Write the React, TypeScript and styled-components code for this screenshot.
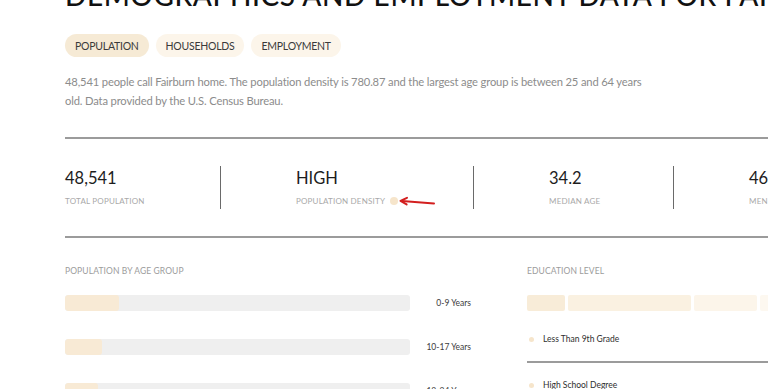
import styled, { createGlobalStyle } from 'styled-components';

const GlobalStyle = createGlobalStyle`
	html, body {
		margin: 0;
		padding: 0;
		background: #ffffff;
		overflow: hidden;
	}

	body {
		font-family: Lato, 'Open Sans', sans-serif;
		color: #222;
	}
`;

const tabs = [
	{ label: 'POPULATION', active: true },
	{ label: 'HOUSEHOLDS', active: false },
	{ label: 'EMPLOYMENT', active: false },
];

const stats = [
	{ value: '48,541', label: 'TOTAL POPULATION', width: 155, info: false },
	{ value: 'HIGH', label: 'POPULATION DENSITY', width: 253, info: true },
	{ value: '34.2', label: 'MEDIAN AGE', width: 200, info: false },
	{ value: '46', label: 'MEN', width: 200, info: false },
];

const ageGroups = [
	{ label: '0-9 Years', pct: 15.7 },
	{ label: '10-17 Years', pct: 10.8 },
	{ label: '18-24 Years', pct: 9.5 },
];

const eduSegments = [
	{ width: 38, color: '#f8ecd8' },
	{ width: 123, color: '#faf1e1' },
	{ width: 63, color: '#fcf5ea' },
	{ width: 60, color: '#fdf8f0' },
];

const eduLegend = ['Less Than 9th Grade', 'High School Degree'];

function App() {
	return (
		<>
			<GlobalStyle />
			<Page>
				<Heading>DEMOGRAPHICS AND EMPLOYMENT DATA FOR FAIRBURN</Heading>

				<TabRow>
					{tabs.map((tab) => (
						<Tab key={tab.label} $active={tab.active}>
							{tab.label}
						</Tab>
					))}
				</TabRow>

				<Intro>
					48,541 people call Fairburn home. The population density is 780.87 and the largest age group is between 25 and 64 years
					old. Data provided by the U.S. Census Bureau.
				</Intro>

				<StatsBar>
					{stats.map((stat, i) => (
						<StatCell key={stat.label} $width={stat.width} $first={i === 0}>
							<StatValue>{stat.value}</StatValue>
							<StatLabel>
								{stat.label}
								{stat.info && (
									<InfoWrap>
										<InfoDot />
										{/* 주석용 빨간 화살표 */}
										<Arrow width="40" height="10" viewBox="0 0 40 10">
											<path d="M36 7.5 L4 5" stroke="#d31f1f" strokeWidth="2" fill="none" strokeLinecap="round" />
											<path d="M9 1.8 L2.5 4.9 L8.6 8.4" stroke="#d31f1f" strokeWidth="2" fill="none" strokeLinecap="round" strokeLinejoin="round" />
										</Arrow>
									</InfoWrap>
								)}
							</StatLabel>
						</StatCell>
					))}
				</StatsBar>

				<Columns>
					<AgeColumn>
						<SectionTitle>POPULATION BY AGE GROUP</SectionTitle>
						{ageGroups.map((group) => (
							<AgeRow key={group.label}>
								<Track>
									<Fill style={{ width: `${group.pct}%` }} />
								</Track>
								<AgeLabel>{group.label}</AgeLabel>
							</AgeRow>
						))}
					</AgeColumn>

					<EduColumn>
						<SectionTitle>EDUCATION LEVEL</SectionTitle>
						<StackBar>
							{eduSegments.map((seg, i) => (
								<Segment key={i} $w={seg.width} $color={seg.color} />
							))}
						</StackBar>
						<Legend>
							{eduLegend.map((item, i) => (
								<LegendRow key={item} $divider={i < eduLegend.length - 1}>
									<Dot />
									{item}
								</LegendRow>
							))}
						</Legend>
					</EduColumn>
				</Columns>
			</Page>
		</>
	);
}

const Page = styled.div`
	width: 1400px;
	padding-left: 65px;
	margin-top: -25px;
`;

const Heading = styled.h1`
	margin: 0;
	font-family: Lato, sans-serif;
	font-size: 28px;
	line-height: 40px;
	font-weight: 500;
	letter-spacing: 0.6px;
	color: #111;
	white-space: nowrap;
`;

const TabRow = styled.div`
	display: flex;
	gap: 7px;
	margin-top: 19px;
`;

const Tab = styled.div<{ $active: boolean }>`
	display: flex;
	align-items: center;
	height: 23px;
	padding: 0 10px;
	border-radius: 12px;
	font-size: 10.5px;
	letter-spacing: -0.25px;
	color: #3a3a3a;
	background: ${({ $active }) => ($active ? '#f6ead5' : '#fcf5ea')};
`;

const Intro = styled.p`
	width: 585px;
	margin: 15px 0 0;
	font-size: 11.2px;
	line-height: 19px;
	color: #8c8c8c;
	letter-spacing: -0.15px;
`;

const StatsBar = styled.div`
	display: flex;
	align-items: stretch;
	margin-top: 27px;
	padding: 27px 0 27px;
	border-top: 2px solid #9b9b9b;
	border-bottom: 2px solid #9b9b9b;
`;

const StatCell = styled.div<{ $width: number; $first: boolean }>`
	box-sizing: border-box;
	flex: 0 0 ${({ $width }) => $width}px;
	padding-left: ${({ $first }) => ($first ? 0 : 75)}px;
	border-left: ${({ $first }) => ($first ? 'none' : '1.5px solid #6a6a6a')};
	height: 43px;
`;

const StatValue = styled.div`
	font-size: 16.5px;
	line-height: 22px;
	color: #1d1d1d;
	margin-top: 1px;
`;

const StatLabel = styled.div`
	display: flex;
	align-items: center;
	margin-top: 7px;
	font-size: 8px;
	line-height: 10px;
	letter-spacing: 0.2px;
	color: #a9a9a9;
`;

const InfoWrap = styled.span`
	position: relative;
	display: inline-flex;
	margin-left: 5px;
`;

const InfoDot = styled.span`
	display: inline-block;
	width: 8px;
	height: 8px;
	border-radius: 50%;
	background: #f6e5cb;
`;

const Arrow = styled.svg`
	position: absolute;
	left: 8px;
	top: -1px;
`;

const Columns = styled.div`
	display: flex;
	margin-top: 27px;
`;

const AgeColumn = styled.div`
	width: 406px;
`;

const EduColumn = styled.div`
	margin-left: 56px;
	width: 400px;
`;

const SectionTitle = styled.div`
	font-size: 8.5px;
	line-height: 12px;
	letter-spacing: 0.1px;
	color: #9c9c9c;
	margin-bottom: 18px;
`;

const AgeRow = styled.div`
	display: flex;
	align-items: center;
	height: 16px;
	margin-bottom: 28px;
`;

const Track = styled.div`
	position: relative;
	flex: 0 0 345px;
	height: 16px;
	border-radius: 3px;
	background: #efefef;
	overflow: hidden;
`;

const Fill = styled.div`
	height: 100%;
	border-radius: 3px;
	background: #f8ead5;
`;

const AgeLabel = styled.div`
	flex: 1;
	text-align: right;
	font-size: 8.5px;
	color: #3b3b3b;
`;

const StackBar = styled.div`
	display: flex;
	gap: 3px;
	height: 16px;
`;

const Segment = styled.div<{ $w: number; $color: string }>`
	flex: 0 0 ${({ $w }) => $w}px;
	background: ${({ $color }) => $color};
	border-radius: 2px;
`;

const Legend = styled.div`
	margin-top: 6px;
`;

const LegendRow = styled.div<{ $divider: boolean }>`
	display: flex;
	align-items: center;
	gap: 9px;
	height: 44px;
	padding-left: 2px;
	font-size: 8.5px;
	color: #2e2e2e;
	border-bottom: ${({ $divider }) => ($divider ? '2px solid #9b9b9b' : 'none')};
`;

const Dot = styled.span`
	width: 5px;
	height: 5px;
	border-radius: 50%;
	background: #f6e5cb;
`;

export default App;
